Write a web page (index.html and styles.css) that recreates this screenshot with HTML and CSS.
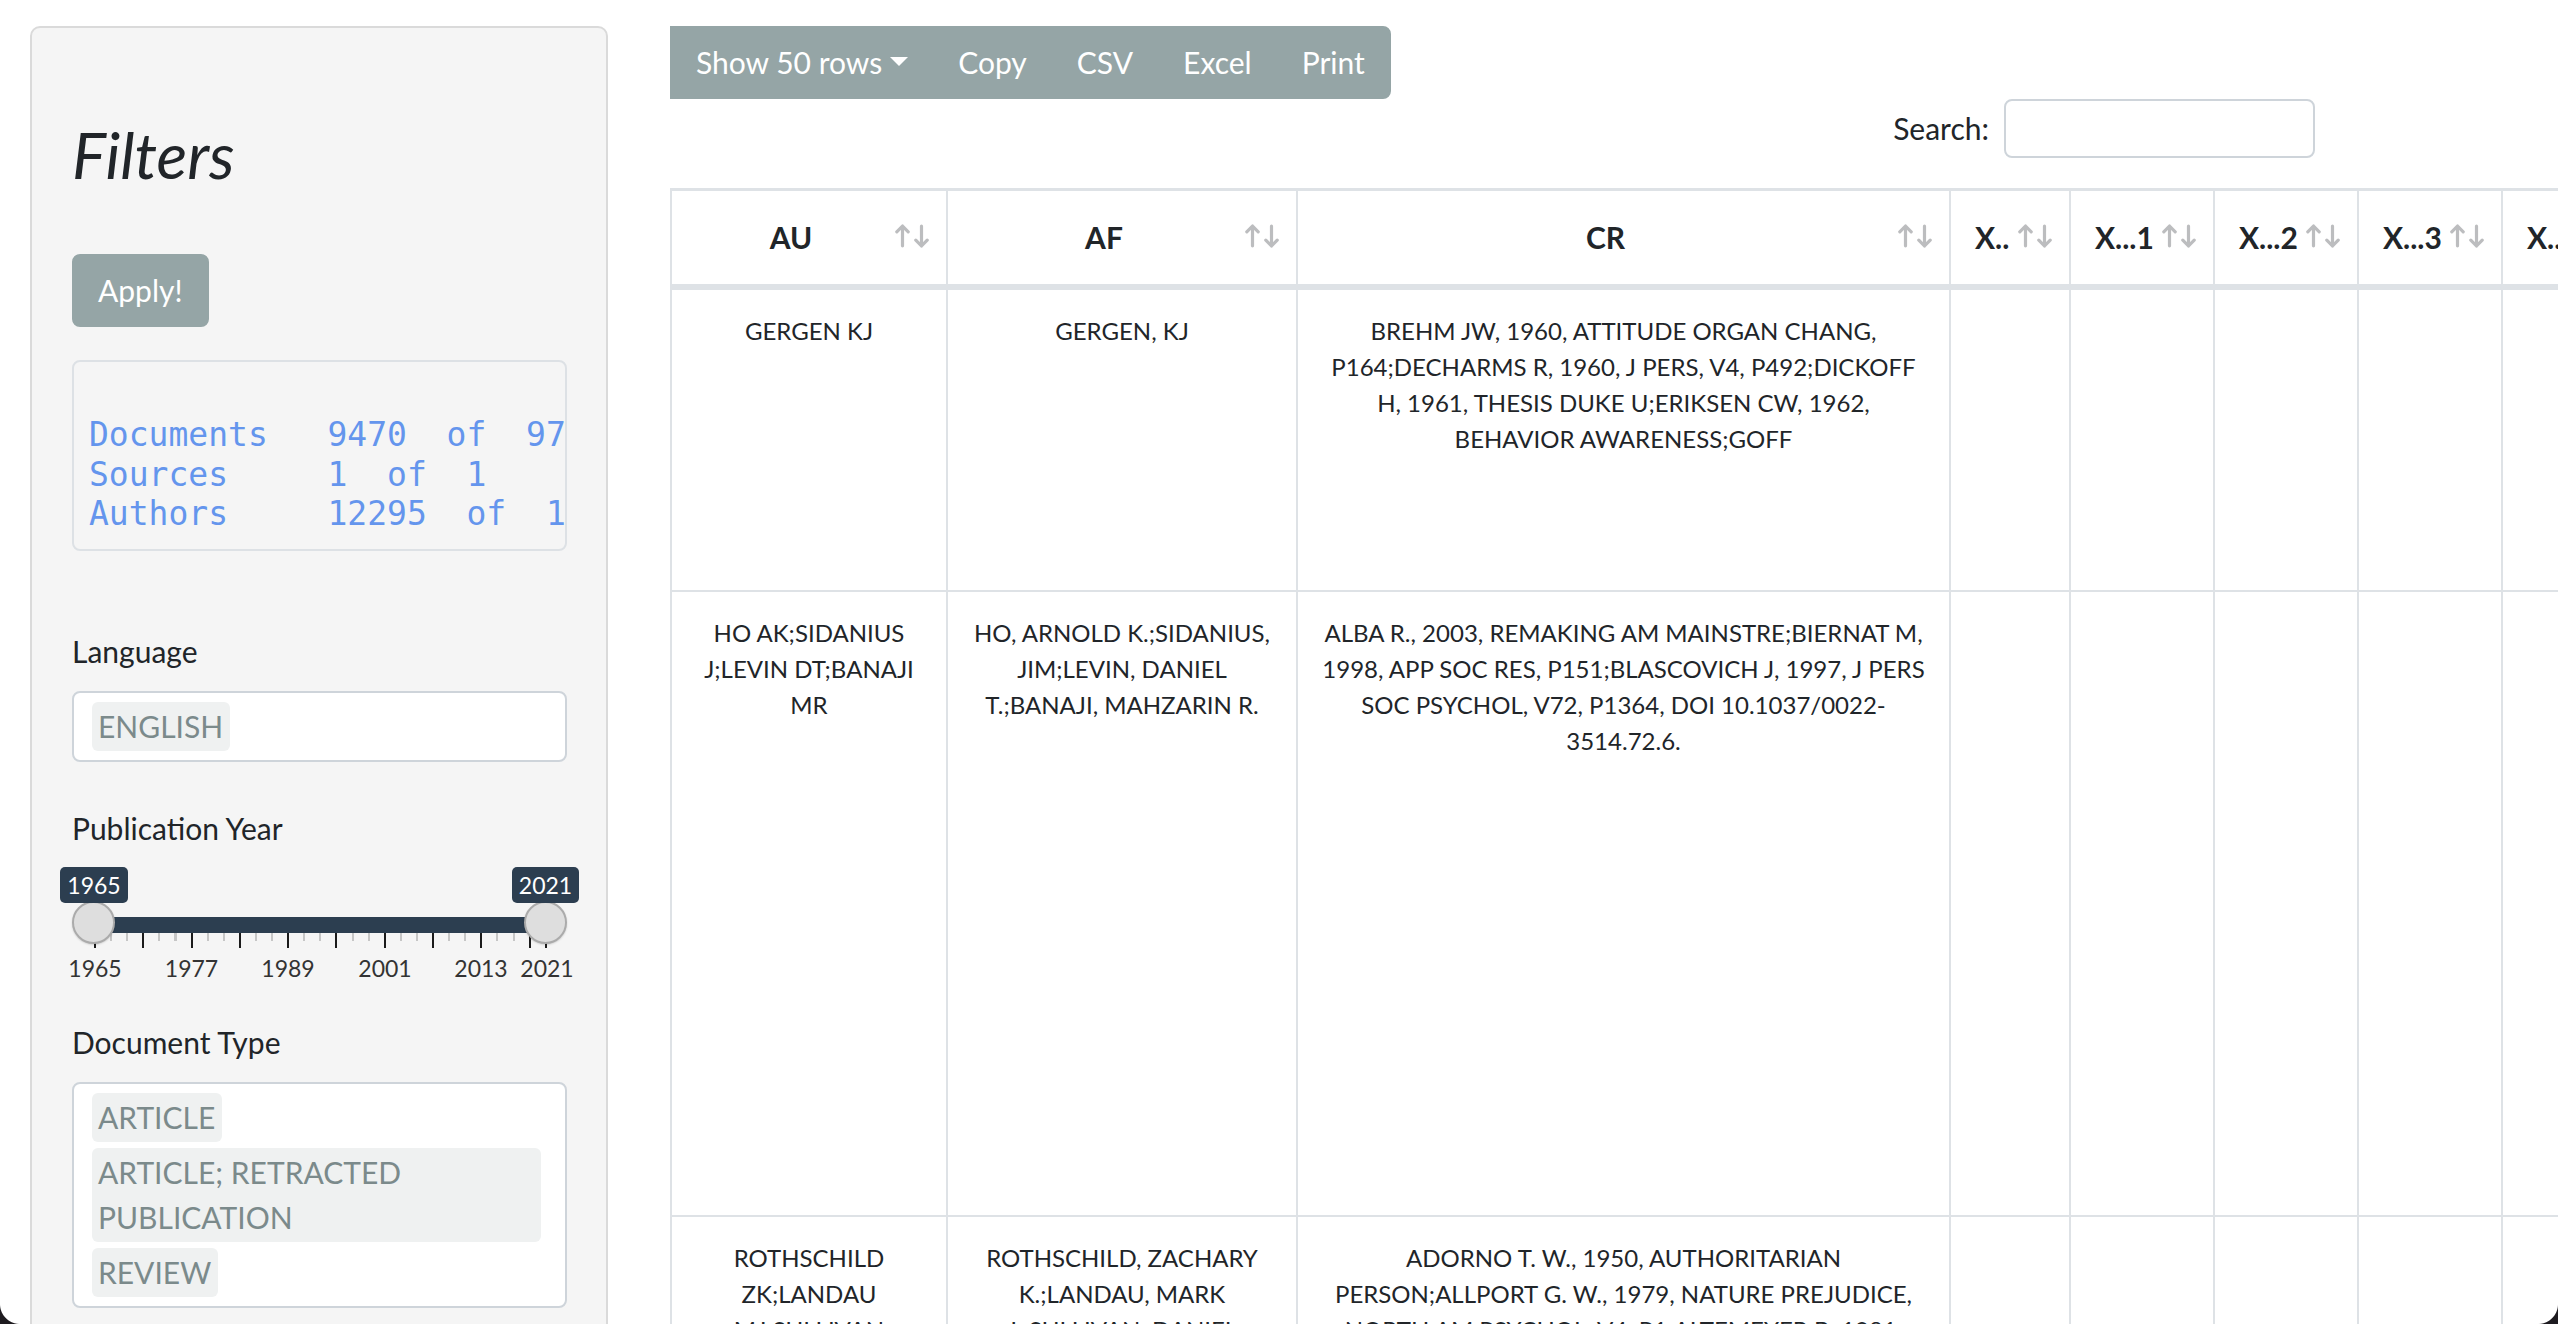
FILE: index.html
```html
<!DOCTYPE html>
<html lang="en">
<head>
<meta charset="utf-8">
<title>Filters</title>
<link rel="stylesheet" href="styles.css">
</head>
<body>
<svg class="sprite" width="0" height="0" aria-hidden="true">
  <symbol id="sort" viewBox="0 0 34 24">
    <path d="M7.5 21.8V2M1.8 7.8L7.5 2l5.7 5.8"/>
    <path d="M26.5 2.2v19.8M20.8 16.2l5.7 5.8 5.7-5.8"/>
  </symbol>
</svg>
<div class="layout">
  <aside class="sidebar">
    <h2 class="title">Filters</h2>
    <button class="btn apply" type="button">Apply!</button>
    <pre class="stats">Documents   9470  of  9766
Sources     1  of  1
Authors     12295  of  12616</pre>

    <label class="field-label lbl-lang">Language</label>
    <div class="select">
      <span class="chip">ENGLISH</span>
    </div>

    <label class="field-label lbl-year">Publication Year</label>
    <div class="slider">
      <div class="sl-minor"></div>
      <div class="sl-major"></div>
      <div class="sl-tick-end"></div>
      <div class="sl-bar"></div>
      <div class="sl-handle sl-from"></div>
      <div class="sl-handle sl-to"></div>
      <span class="sl-badge sl-badge-from">1965</span>
      <span class="sl-badge sl-badge-to">2021</span>
      <span class="sl-label g1">1965</span>
      <span class="sl-label g2">1977</span>
      <span class="sl-label g3">1989</span>
      <span class="sl-label g4">2001</span>
      <span class="sl-label g5">2013</span>
      <span class="sl-label g6">2021</span>
    </div>

    <label class="field-label lbl-doc">Document Type</label>
    <div class="select">
      <span class="chip">ARTICLE</span>
      <span class="chip">ARTICLE; RETRACTED PUBLICATION</span>
      <span class="chip">REVIEW</span>
    </div>
  </aside>

  <main class="main">
    <div class="dt-top">
      <div class="btn-group">
        <button class="btn" type="button">Show 50 rows<span class="caret"></span></button>
        <button class="btn" type="button">Copy</button>
        <button class="btn" type="button">CSV</button>
        <button class="btn" type="button">Excel</button>
        <button class="btn" type="button">Print</button>
      </div>
      <div class="dt-search">
        <label class="search-label">Search:<input class="search-input" type="search"></label>
      </div>
    </div>

    <table class="dt">
      <thead>
        <tr>
          <th class="w-au">AU<svg class="sort"><use href="#sort"/></svg></th>
          <th class="w-af">AF<svg class="sort"><use href="#sort"/></svg></th>
          <th class="w-cr">CR<svg class="sort"><use href="#sort"/></svg></th>
          <th class="w-x">X..<svg class="sort"><use href="#sort"/></svg></th>
          <th class="w-xn">X...1<svg class="sort"><use href="#sort"/></svg></th>
          <th class="w-xn">X...2<svg class="sort"><use href="#sort"/></svg></th>
          <th class="w-xn">X...3<svg class="sort"><use href="#sort"/></svg></th>
          <th class="w-xn">X...4<svg class="sort"><use href="#sort"/></svg></th>
        </tr>
      </thead>
      <tbody>
        <tr class="r1">
          <td>GERGEN KJ</td>
          <td>GERGEN, KJ</td>
          <td>BREHM JW, 1960, ATTITUDE ORGAN CHANG,<br>P164;DECHARMS R, 1960, J PERS, V4, P492;DICKOFF<br>H, 1961, THESIS DUKE U;ERIKSEN CW, 1962,<br>BEHAVIOR AWARENESS;GOFF</td>
          <td></td><td></td><td></td><td></td><td></td>
        </tr>
        <tr class="r2">
          <td>HO AK;SIDANIUS<br>J;LEVIN DT;BANAJI<br>MR</td>
          <td>HO, ARNOLD K.;SIDANIUS,<br>JIM;LEVIN, DANIEL<br>T.;BANAJI, MAHZARIN R.</td>
          <td>ALBA R., 2003, REMAKING AM MAINSTRE;BIERNAT M,<br>1998, APP SOC RES, P151;BLASCOVICH J, 1997, J PERS<br>SOC PSYCHOL, V72, P1364, DOI 10.1037/0022-<br>3514.72.6.</td>
          <td></td><td></td><td></td><td></td><td></td>
        </tr>
        <tr class="r3">
          <td>ROTHSCHILD<br>ZK;LANDAU<br>MJ;SULLIVAN</td>
          <td>ROTHSCHILD, ZACHARY<br>K.;LANDAU, MARK<br>J.;SULLIVAN, DANIEL</td>
          <td>ADORNO T. W., 1950, AUTHORITARIAN<br>PERSON;ALLPORT G. W., 1979, NATURE PREJUDICE,<br>NORTH AM PSYCHOL, V4, P1;ALTEMEYER B, 1981,</td>
          <td></td><td></td><td></td><td></td><td></td>
        </tr>
      </tbody>
    </table>
  </main>
</div>
<div class="corner corner-bl"></div>
<div class="corner corner-br"></div>
</body>
</html>
```

FILE: styles.css
```css
html, body {
  margin: 0;
  height: 100%;
  overflow: hidden;
  background: #fff;
}

body {
  font-family: Lato, "Noto Sans", sans-serif;
  font-size: 30px;
  line-height: 45px;
  color: #212529;
}

.sprite {
  position: absolute;
  width: 0;
  height: 0;
  overflow: hidden;
}

.layout {
  display: flex;
  align-items: flex-start;
  padding: 26px 0 0 30px;
}

/* ---------- sidebar ---------- */
.sidebar {
  flex: none;
  width: 578px;
  box-sizing: border-box;
  background: #f5f5f5;
  border: 2px solid #dadada;
  border-radius: 10px;
  padding: 38px 39px 38px 40px;
}

.title {
  margin: 50px 0 0;
  font-style: italic;
  font-weight: 400;
  font-size: 64px;
  line-height: 77px;
  color: #212529;
}

.btn {
  font-family: inherit;
  font-size: 30px;
  line-height: 45px;
  color: #fff;
  background: #95a5a6;
  border: 2px solid #95a5a6;
  padding: 12px 24px;
  margin: 0;
  border-radius: 0;
  white-space: nowrap;
}

.apply {
  display: block;
  margin-top: 61px;
  border-radius: 8px;
}

.stats {
  display: block;
  box-sizing: border-box;
  height: 191px;
  margin: 33px 0 0;
  padding: 53px 0 16px 15px;
  background: #f5f5f5;
  border: 2px solid #dde1e5;
  border-radius: 8px;
  overflow: hidden;
  white-space: pre;
  font-family: "DejaVu Sans Mono", "Liberation Mono", monospace;
  font-size: 33px;
  line-height: 39.5px;
  color: #6495ed;
}

.field-label {
  display: block;
  font-size: 30px;
  line-height: 45px;
  margin: 0 0 17px;
  color: #212529;
}

.lbl-lang { margin-top: 78px; }
.lbl-year { margin-top: 44px; margin-bottom: 0; }
.lbl-doc { margin-top: 29px; }

.select {
  box-sizing: border-box;
  display: flex;
  flex-direction: column;
  align-items: flex-start;
  gap: 6px;
  background: #fff;
  border: 2px solid #ced4da;
  border-radius: 8px;
  padding: 9px 24px 9px 18px;
}

.chip {
  box-sizing: border-box;
  max-width: 100%;
  background: #eff1f1;
  color: #7b8a8b;
  border-radius: 6px;
  padding: 2px 7px 2px 6px;
  font-size: 30px;
  line-height: 45px;
}

/* ---------- range slider ---------- */
.slider {
  position: relative;
  height: 140px;
}

.sl-minor {
  position: absolute;
  left: 22px;
  top: 82px;
  width: 438px;
  height: 8px;
  background: repeating-linear-gradient(90deg, #c6c6c6 0 2px, transparent 2px 16.1px);
}

.sl-major {
  position: absolute;
  left: 22px;
  top: 82px;
  width: 438px;
  height: 15px;
  background: repeating-linear-gradient(90deg, #1b1b1b 0 2px, transparent 2px 48.3px);
}

.sl-tick-end {
  position: absolute;
  left: 473px;
  top: 82px;
  width: 2px;
  height: 15px;
  background: #1b1b1b;
}

.sl-bar {
  position: absolute;
  left: 22px;
  top: 66px;
  width: 452px;
  height: 16px;
  background: #2c3e50;
}

.sl-handle {
  position: absolute;
  top: 50px;
  width: 43px;
  height: 43px;
  box-sizing: border-box;
  border-radius: 50%;
  background: #dedede;
  border: 2px solid #ababab;
  box-shadow: 0 1px 2px rgba(0, 0, 0, 0.15);
}

.sl-from { left: 0; }
.sl-to { left: 452px; }

.sl-badge {
  position: absolute;
  top: 16px;
  height: 36px;
  box-sizing: border-box;
  background: #2c3e50;
  color: #fff;
  border-radius: 5px;
  font-size: 23px;
  line-height: 36px;
  text-align: center;
}

.sl-badge-from { left: -12px; width: 68px; }
.sl-badge-to { left: 440px; width: 67px; }

.sl-label {
  position: absolute;
  top: 103px;
  width: 60px;
  text-align: center;
  font-size: 23px;
  line-height: 28px;
  color: #333;
}

.g1 { left: -7px; }
.g2 { left: 89.5px; }
.g3 { left: 186px; }
.g4 { left: 283px; }
.g5 { left: 379px; }
.g6 { left: 445px; }

/* ---------- main area ---------- */
.main {
  flex: 1;
  min-width: 0;
  margin-left: 62px;
  overflow: hidden;
}

.dt-top {
  width: 1645px;
}

.btn-group {
  display: inline-flex;
}

.btn-group .btn + .btn {
  margin-left: -2px;
}

.btn-group .btn:last-child {
  border-radius: 0 8px 8px 0;
}

.caret {
  display: inline-block;
  width: 0;
  height: 0;
  margin-left: 8px;
  vertical-align: 0.255em;
  border-top: 9px solid #fff;
  border-left: 9px solid transparent;
  border-right: 9px solid transparent;
}

.dt-search {
  display: flex;
  justify-content: flex-end;
  height: 59px;
}

.search-label {
  display: inline-flex;
  align-items: center;
  font-size: 30px;
  color: #212529;
}

.search-input {
  margin-left: 15px;
  width: 311px;
  height: 59px;
  box-sizing: border-box;
  border: 2px solid #ced4da;
  border-radius: 8px;
  padding: 5px 12px;
  font: inherit;
  background: #fff;
}

.dt {
  margin-top: 30px;
  border-collapse: separate;
  border-spacing: 0;
  table-layout: fixed;
  width: 1977px;
  border-left: 2px solid #dee2e6;
}

.dt th {
  position: relative;
  box-sizing: border-box;
  padding: 24px 60px 24px 24px;
  font-weight: 700;
  font-size: 30px;
  line-height: 45px;
  text-align: center;
  white-space: nowrap;
  color: #212529;
  border-top: 3px solid #dee2e6;
  border-bottom: 4px solid #dee2e6;
  border-right: 2px solid #dee2e6;
}

.w-au { width: 276px; }
.w-af { width: 350px; }
.w-cr { width: 653px; }
.w-x { width: 120px; }
.w-xn { width: 144px; }

.sort {
  position: absolute;
  right: 17px;
  top: 33px;
  width: 34px;
  height: 24px;
  fill: none;
  stroke: #bcbdbf;
  stroke-width: 3.2;
  stroke-linecap: round;
  stroke-linejoin: round;
}

.dt td {
  box-sizing: border-box;
  padding: 23px 24px;
  font-size: 24px;
  line-height: 36px;
  text-align: center;
  vertical-align: top;
  white-space: nowrap;
  color: #212529;
  border-top: 2px solid #dee2e6;
  border-right: 2px solid #dee2e6;
}

.r1 { height: 302px; }
.r2 { height: 625px; }
.r3 { height: 400px; }

/* rounded window corners of the captured screen */
.corner {
  position: fixed;
  bottom: 0;
  width: 20px;
  height: 20px;
}

.corner-bl {
  left: 0;
  background: radial-gradient(circle at 100% 0, transparent 19.5px, #1e1b20 20.5px);
}

.corner-br {
  right: 0;
  background: radial-gradient(circle at 0 0, transparent 19.5px, #1e1b20 20.5px);
}
```
